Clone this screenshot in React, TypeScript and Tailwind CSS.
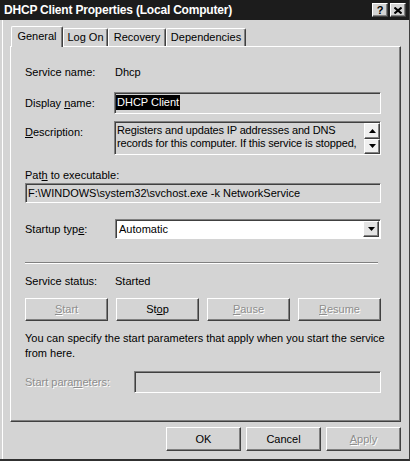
import type { ReactNode } from 'react';

const raised =
  'border border-t-white border-l-white border-r-[#404040] border-b-[#404040] shadow-[inset_-1px_-1px_0_#808080]';
const sunken =
  'border border-t-[#808080] border-l-[#808080] border-r-white border-b-white shadow-[inset_1px_1px_0_#404040]';
const dim = 'text-[#8e8e8e] [text-shadow:1px_1px_0_#ffffff]';

function Arrow({ up = false }: { up?: boolean }) {
  return (
    <svg width="7" height="4" viewBox="0 0 7 4">
      <path d={up ? 'M3.5 0 L7 4 L0 4 Z' : 'M0 0 L7 0 L3.5 4 Z'} fill="#000" />
    </svg>
  );
}

function Btn({ children, disabled = false, w = 'w-[83px]' }: { children: ReactNode; disabled?: boolean; w?: string }) {
  return (
    <div className={`${w} h-full bg-[#d4d4d4] flex items-center justify-center ${raised} ${disabled ? dim : ''}`}>
      {children}
    </div>
  );
}

export default function App() {
  const tabs = [
    { label: 'General', w: 'w-[52px]', active: true },
    { label: 'Log On', w: 'w-[45px]' },
    { label: 'Recovery', w: 'w-[58px]' },
    { label: 'Dependencies', w: 'w-[80px]' },
  ];

  return (
    <div className="w-[410px] h-[461px] bg-[#d4d4d4] flex flex-col text-[11px] leading-none text-black font-['Liberation_Sans',Arial,sans-serif] border-b-2 border-b-[#303030] border-r border-r-[#404040]">
      {/* Title bar */}
      <div className="flex-none h-[20px] bg-[#1c1c1c] flex items-center pl-[4px] pr-[3px]">
        <span className="text-white font-bold text-[12px] tracking-[-0.2px]">DHCP Client Properties (Local Computer)</span>
        <div className="ml-auto flex gap-[2px]">
          <div className={`w-[16px] h-[14px] bg-[#d4d4d4] flex items-center justify-center font-bold text-[11px] ${raised}`}>?</div>
          <div className={`w-[16px] h-[14px] bg-[#d4d4d4] flex items-center justify-center ${raised}`}>
            <svg width="8" height="7" viewBox="0 0 8 7">
              <path d="M0.5 0.5 L7.5 6.5 M7.5 0.5 L0.5 6.5" stroke="#000" strokeWidth="2" />
            </svg>
          </div>
        </div>
      </div>

      {/* Body */}
      <div className="flex-1 flex flex-col ml-[2px] pl-[7px] pr-[8px] border-l border-l-white">
        {/* Tabs */}
        <div className="flex items-end h-[26px] pl-[1px]">
          {tabs.map(t => (
            <div
              key={t.label}
              className={`${t.w} flex items-center justify-center rounded-t-[2px] border-t border-l border-t-white border-l-white border-r border-r-[#404040] shadow-[inset_-1px_0_0_#808080] ${
                t.active ? 'h-[21px] -mb-px relative z-10 bg-[#d4d4d4] pb-[2px]' : 'h-[18px]'
              }`}
            >
              {t.label}
            </div>
          ))}
        </div>

        {/* Panel */}
        <div className="h-[376px] flex flex-col pl-[14px] border border-t-white border-l-white border-r-[#404040] border-b-[#404040] shadow-[inset_-1px_-1px_0_#808080]">
          <div className="mt-[17px] h-[16px] flex items-center">
            <span className="w-[90px]">Service name:</span>
            <span>Dhcp</span>
          </div>

          <div className="mt-[12px] h-[22px] flex items-center">
            <span className="w-[89px]">Display <u>n</u>ame:</span>
            <div className={`w-[267px] h-full ${sunken} pl-[1px] pt-[2px]`}>
              <span className="inline-block bg-black text-white px-[1px] h-[15px] leading-[15px]">DHCP Client</span>
            </div>
          </div>

          <div className="mt-[7px] h-[34px] flex items-start">
            <span className="w-[89px] pt-[6px]"><u>D</u>escription:</span>
            <div className={`w-[267px] h-full ${sunken} flex`}>
              <div className="flex-1 min-w-0 pl-[2px] pt-[2px] leading-[13px] overflow-hidden whitespace-nowrap tracking-[-0.15px]">
                <div>Registers and updates IP addresses and DNS</div>
                <div>records for this computer. If this service is stopped,</div>
              </div>
              <div className="flex flex-col w-[16px] mt-[1px]">
                <div className={`h-[16px] bg-[#f0f0f0] flex items-center justify-center ${raised}`}><Arrow up /></div>
                <div className={`h-[16px] bg-[#f0f0f0] flex items-center justify-center ${raised}`}><Arrow /></div>
              </div>
            </div>
          </div>

          <div className="mt-[12px] h-[16px] flex items-center">
            Pat<u>h</u>&nbsp;to executable:
          </div>
          <div className={`w-[356px] h-[20px] ${sunken} flex items-center pl-[2px]`}>
            F:\WINDOWS\system32\svchost.exe -k NetworkService
          </div>

          <div className="mt-[16px] h-[20px] flex items-center">
            <span className="w-[90px]">Startup typ<u>e</u>:</span>
            <div className={`w-[266px] h-full bg-white ${sunken} flex items-center pl-[3px] pr-[1px]`}>
              <span className="flex-1">Automatic</span>
              <div className={`w-[16px] h-[16px] bg-[#e4e4e4] flex items-center justify-center ${raised}`}><Arrow /></div>
            </div>
          </div>

          <div className="mt-[23px] w-[353px] h-[2px] border-t border-t-[#808080] border-b border-b-white" />

          <div className="mt-[9px] h-[16px] flex items-center">
            <span className="w-[90px]">Service status:</span>
            <span>Started</span>
          </div>

          <div className="mt-[9px] h-[23px] flex w-[356px] justify-between">
            <Btn disabled><span><u>S</u>tart</span></Btn>
            <Btn><span>St<u>o</u>p</span></Btn>
            <Btn disabled><span><u>P</u>ause</span></Btn>
            <Btn disabled><span><u>R</u>esume</span></Btn>
          </div>

          <div className="mt-[10px] leading-[15px] w-[360px]">
            You can specify the start parameters that apply when you start the service from here.
          </div>

          <div className="mt-[10px] h-[22px] flex items-center">
            <span className={`w-[109px] ${dim}`}>Start para<u>m</u>eters:</span>
            <div className={`w-[247px] h-full ${sunken}`} />
          </div>
        </div>

        {/* Dialog buttons */}
        <div className="mt-[5px] h-[24px] flex justify-end gap-[5px]">
          <Btn w="w-[75px]">OK</Btn>
          <Btn w="w-[75px]">Cancel</Btn>
          <Btn w="w-[75px]" disabled><span><u>A</u>pply</span></Btn>
        </div>
      </div>
    </div>
  );
}
